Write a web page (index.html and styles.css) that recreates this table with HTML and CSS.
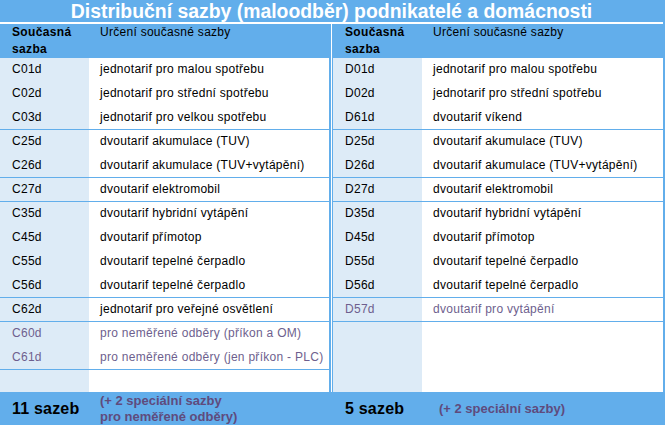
FILE: index.html
```html
<!DOCTYPE html>
<html lang="cs">
<head>
<meta charset="utf-8">
<title>Distribuční sazby</title>
<link rel="stylesheet" href="styles.css">
</head>
<body>
<div class="page">
  <h1 class="title">Distribuční sazby (maloodběr) podnikatelé a domácnosti</h1>
  <div class="panels">
    <div class="panel panel-left">
      <div class="head">
        <div class="hc1">Současná<br>sazba</div>
        <div class="hc2">Určení současné sazby</div>
      </div>
      <div class="body">
        <div class="row"><div class="c1">C01d</div><div class="c2">jednotarif pro malou spotřebu</div></div>
        <div class="row"><div class="c1">C02d</div><div class="c2">jednotarif pro střední spotřebu</div></div>
        <div class="row sep"><div class="c1">C03d</div><div class="c2">jednotarif pro velkou spotřebu</div></div>
        <div class="row"><div class="c1">C25d</div><div class="c2">dvoutarif akumulace (TUV)</div></div>
        <div class="row sep"><div class="c1">C26d</div><div class="c2">dvoutarif akumulace (TUV+vytápění)</div></div>
        <div class="row sep"><div class="c1">C27d</div><div class="c2">dvoutarif elektromobil</div></div>
        <div class="row"><div class="c1">C35d</div><div class="c2">dvoutarif hybridní vytápění</div></div>
        <div class="row"><div class="c1">C45d</div><div class="c2">dvoutarif přímotop</div></div>
        <div class="row"><div class="c1">C55d</div><div class="c2">dvoutarif tepelné čerpadlo</div></div>
        <div class="row sep"><div class="c1">C56d</div><div class="c2">dvoutarif tepelné čerpadlo</div></div>
        <div class="row sep"><div class="c1">C62d</div><div class="c2">jednotarif pro veřejné osvětlení</div></div>
        <div class="row muted"><div class="c1">C60d</div><div class="c2">pro neměřené odběry (příkon a OM)</div></div>
        <div class="row sep muted"><div class="c1">C61d</div><div class="c2">pro neměřené odběry (jen příkon - PLC)</div></div>
        <div class="row filler"><div class="c1"></div><div class="c2"></div></div>
      </div>
      <div class="foot">
        <div class="fc1">11 sazeb</div>
        <div class="fc2">(+ 2 speciální sazby<br>pro neměřené odběry)</div>
      </div>
    </div>
    <div class="divider"></div>
    <div class="panel panel-right">
      <div class="head">
        <div class="hc1">Současná<br>sazba</div>
        <div class="hc2">Určení současné sazby</div>
      </div>
      <div class="body">
        <div class="row"><div class="c1">D01d</div><div class="c2">jednotarif pro malou spotřebu</div></div>
        <div class="row"><div class="c1">D02d</div><div class="c2">jednotarif pro střední spotřebu</div></div>
        <div class="row sep"><div class="c1">D61d</div><div class="c2">dvoutarif víkend</div></div>
        <div class="row"><div class="c1">D25d</div><div class="c2">dvoutarif akumulace (TUV)</div></div>
        <div class="row sep"><div class="c1">D26d</div><div class="c2">dvoutarif akumulace (TUV+vytápění)</div></div>
        <div class="row sep"><div class="c1">D27d</div><div class="c2">dvoutarif elektromobil</div></div>
        <div class="row"><div class="c1">D35d</div><div class="c2">dvoutarif hybridní vytápění</div></div>
        <div class="row"><div class="c1">D45d</div><div class="c2">dvoutarif přímotop</div></div>
        <div class="row"><div class="c1">D55d</div><div class="c2">dvoutarif tepelné čerpadlo</div></div>
        <div class="row sep"><div class="c1">D56d</div><div class="c2">dvoutarif tepelné čerpadlo</div></div>
        <div class="row sep muted"><div class="c1">D57d</div><div class="c2">dvoutarif pro vytápění</div></div>
        <div class="row blank"><div class="c1"></div><div class="c2"></div></div>
      </div>
      <div class="foot foot-single">
        <div class="fc1">5 sazeb</div>
        <div class="fc2">(+ 2 speciální sazby)</div>
      </div>
    </div>
  </div>
</div>
</body>
</html>
```

FILE: styles.css
```css
html, body {
  margin: 0;
  padding: 0;
}
body {
  background: #62aeeb;
  font-family: "Liberation Sans", Arial, sans-serif;
  color: #000;
}
.page {
  width: 665px;
  height: 425px;
  overflow: hidden;
}
.title {
  margin: 0 2px 0 0;
  height: 22px;
  line-height: 22px;
  font-size: 19.4px;
  font-weight: bold;
  color: #fff;
  text-align: center;
  border-bottom: 2px solid #fff;
}
.panels {
  display: flex;
  height: 401px;
}
.panel {
  display: flex;
  flex-direction: column;
}
.panel-left {
  width: 329px;
}
.panel-right {
  width: 330px;
}
.divider {
  width: 1px;
  margin: 0 1px 0 2px;
  background: #fff;
  height: 368px;
}
.head {
  height: 34px;
  display: grid;
  grid-template-columns: 89px 1fr;
  font-size: 12px;
  line-height: 17px;
  letter-spacing: 0.28px;
}
.hc1 {
  font-weight: bold;
  padding-left: 12px;
  letter-spacing: 0.35px;
}
.hc2 {
  padding-left: 11px;
}
.body {
  display: flex;
  flex-direction: column;
}
.row {
  display: grid;
  grid-template-columns: 89px 1fr;
  height: 24px;
  box-sizing: border-box;
  font-size: 12px;
  line-height: 23px;
  letter-spacing: 0.28px;
}
.row .c1 {
  background: #ddebf7;
  padding-left: 12px;
}
.row .c2 {
  background: #fff;
  padding-left: 11px;
  white-space: nowrap;
}
.row.sep {
  border-bottom: 1px solid #62aeeb;
}
.row.muted {
  color: #6e5f8e;
}
.row.filler {
  height: 22px;
}
.row.blank {
  height: 70px;
}
.foot {
  flex: 1;
  display: grid;
  grid-template-columns: 89px 1fr;
  align-items: center;
}
.fc1 {
  padding-left: 12px;
  font-size: 16px;
  font-weight: bold;
  letter-spacing: 0.2px;
}
.fc2 {
  padding-left: 11px;
  font-size: 13px;
  line-height: 16px;
  font-weight: bold;
  color: #5f4b7d;
}
.foot-single .fc2 {
  padding-left: 17px;
}
```
